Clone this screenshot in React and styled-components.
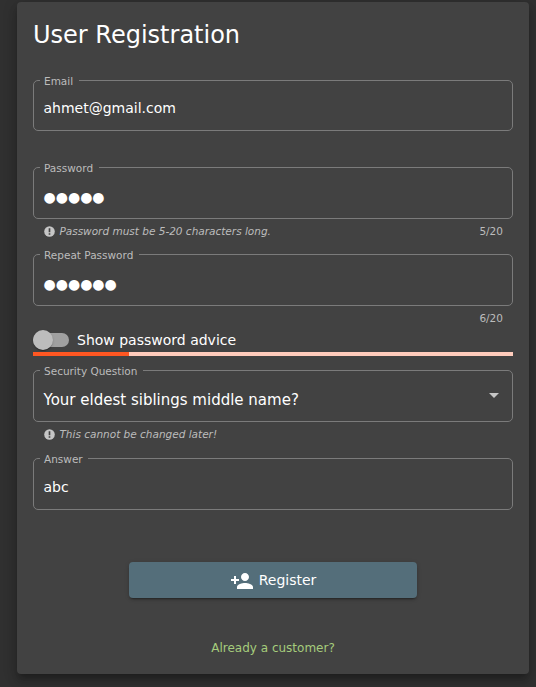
import React from "react";
import styled, { createGlobalStyle } from "styled-components";

const Global = createGlobalStyle`
  * { box-sizing: border-box; }
  body {
    margin: 0;
    background: #303030;
    color: #fff;
    font-family: "DejaVu Sans", sans-serif;
    font-size: 14px;
    overflow: hidden;
  }
`;

const Page = styled.main`
  height: 687px;
  padding: 2px 7px 13px 17px;
`;

const Card = styled.form`
  display: flex;
  flex-direction: column;
  height: 672px;
  padding: 16px;
  border-radius: 4px;
  background: #424242;
  box-shadow: 0 5px 5px -3px rgba(0, 0, 0, 0.2), 0 8px 10px 1px rgba(0, 0, 0, 0.14),
    0 3px 14px 2px rgba(0, 0, 0, 0.12);
`;

const Title = styled.h1`
  margin: 0;
  height: 62px;
  font-size: 24px;
  line-height: 34px;
  font-weight: 400;
`;

const Outline = styled.fieldset`
  display: block;
  flex: none;
  margin: 0;
  min-width: 0;
  height: ${(p) => p.$height || 52}px;
  padding: 0 10px 0 6px;
  border: 1px solid #7b7b7b;
  border-radius: 5px;
`;

const Label = styled.legend`
  height: 1px;
  padding: 0 5.6px 0 4px;
  font-size: 10.5px;
  line-height: 2px;
  color: #bcbcbc;
  white-space: nowrap;
`;

const Value = styled.div`
  display: flex;
  align-items: center;
  justify-content: space-between;
  height: 50px;
  padding: ${(p) => p.$top || 4}px 0 0 3.5px;
  font-size: ${(p) => p.$size || 14}px;
  white-space: nowrap;
`;

const Hints = styled.div`
  display: flex;
  flex: none;
  align-items: flex-start;
  height: ${(p) => p.$height}px;
  padding: 6px 10px 0 11px;
  font-size: 10.5px;
  line-height: 13px;
  color: #bcbcbc;
`;

const Hint = styled.em`
  display: flex;
  align-items: center;
  gap: 4.4px;
`;

const Counter = styled.span`
  margin-left: auto;
`;

const ToggleRow = styled.div`
  display: flex;
  align-items: center;
  height: 24px;
  gap: 8px;
  flex: none;
`;

const Track = styled.span`
  display: flex;
  align-items: center;
  width: 36px;
  height: 14px;
  border-radius: 7px;
  background: #a0a0a0;
`;

const Thumb = styled.span`
  width: 20px;
  height: 20px;
  flex: none;
  border-radius: 50%;
  background: #bdbdbd;
  box-shadow: 0 2px 1px -1px rgba(0, 0, 0, 0.2), 0 1px 1px rgba(0, 0, 0, 0.14),
    0 1px 3px rgba(0, 0, 0, 0.12);
`;

const Strength = styled.div`
  flex: none;
  height: 4px;
  margin-bottom: 14px;
  background: #ffccbc;
`;

const StrengthFill = styled.div`
  width: 20%;
  height: 100%;
  background: #ff5722;
`;

const Register = styled.button`
  display: flex;
  flex: none;
  align-items: center;
  justify-content: center;
  align-self: center;
  gap: 5px;
  width: 288px;
  height: 36px;
  margin-top: 52px;
  padding: 0;
  border: 0;
  border-radius: 4px;
  background: #546e7a;
  color: #fff;
  font: 14px "DejaVu Sans", sans-serif;
  box-shadow: 0 3px 1px -2px rgba(0, 0, 0, 0.2), 0 2px 2px rgba(0, 0, 0, 0.14),
    0 1px 5px rgba(0, 0, 0, 0.12);
`;

const RegisterIcon = styled.svg`
  margin-top: 2px;
`;

const Login = styled.a`
  align-self: center;
  margin-top: 42px;
  font-size: 12px;
  line-height: 16px;
  color: #a5cc7c;
`;

const InfoIcon = () => (
  <svg width="11" height="11" viewBox="0 0 24 24">
    <circle cx="12" cy="12" r="11.5" fill="#c6c6c6" />
    <path fill="#424242" d="M10.2 5h3.6v8.6h-3.6zM10.2 15.8h3.6v3.2h-3.6z" />
  </svg>
);

const Arrow = styled.svg`
  margin: -10px 3px 0 0;
`;

const Field = ({ label, height, children, ...value }) => (
  <Outline $height={height}>
    <Label>{label}</Label>
    <Value {...value}>{children}</Value>
  </Outline>
);

export default function App() {
  return (
    <Page>
      <Global />
      <Card>
        <Title>User Registration</Title>
        <Field label="Email" height={51}>ahmet@gmail.com</Field>
        <Hints $height={36} />
        <Field label="Password" $top={8}>●●●●●</Field>
        <Hints $height={35}>
          <Hint><InfoIcon />Password must be 5-20 characters long.</Hint>
          <Counter>5/20</Counter>
        </Hints>
        <Field label="Repeat Password" $top={8}>●●●●●●</Field>
        <Hints $height={22}>
          <Counter>6/20</Counter>
        </Hints>
        <ToggleRow>
          <Track><Thumb /></Track>
          <span>Show password advice</span>
        </ToggleRow>
        <Strength><StrengthFill /></Strength>
        <Field label="Security Question" $size={15} $top={8}>
          Your eldest siblings middle name?
          <Arrow width="10" height="5" viewBox="0 0 10 5">
            <path d="M0 0h10L5 5z" fill="#c6c6c6" />
          </Arrow>
        </Field>
        <Hints $height={36}>
          <Hint><InfoIcon />This cannot be changed later!</Hint>
        </Hints>
        <Field label="Answer" $top={6}>abc</Field>
        <Register type="button">
          <RegisterIcon width="24" height="24" viewBox="0 0 24 24" fill="#fff">
            <path d="M15 12c2.21 0 4-1.79 4-4s-1.79-4-4-4-4 1.79-4 4 1.79 4 4 4zm-9-2V7H4v3H1v2h3v3h2v-3h3v-2H6zm9 4c-2.67 0-8 1.34-8 4v2h16v-2c0-2.66-5.33-4-8-4z" />
          </RegisterIcon>
          Register
        </Register>
        <Login>Already a customer?</Login>
      </Card>
    </Page>
  );
}
